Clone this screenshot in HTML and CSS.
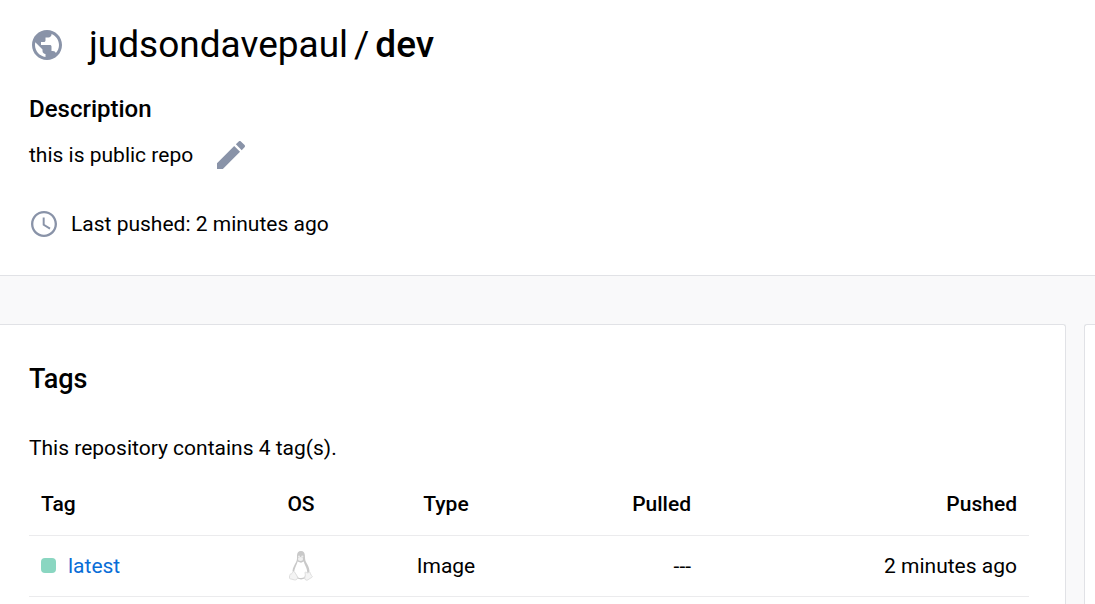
FILE: index.html
```html
<!DOCTYPE html>
<html lang="en">
<head>
<meta charset="utf-8">
<title>judsondavepaul/dev</title>
<link rel="stylesheet" href="styles.css">
</head>
<body>
<header class="repo">
  <div class="repo-title">
    <svg class="icon-globe" viewBox="2 2 20 20" aria-hidden="true"><path d="M12 2C6.48 2 2 6.48 2 12s4.48 10 10 10 10-4.48 10-10S17.52 2 12 2zm-1 17.93c-3.95-.49-7-3.85-7-7.93 0-.62.08-1.21.21-1.79L9 15v1c0 1.1.9 2 2 2v1.93zm6.9-2.54c-.26-.81-1-1.39-1.9-1.39h-1v-3c0-.55-.45-1-1-1H8v-2h2c.55 0 1-.45 1-1V7h2c1.1 0 2-.9 2-2v-.41c2.93 1.19 5 4.06 5 7.41 0 2.08-.8 3.97-2.1 5.39z"/></svg>
    <h1 class="repo-name"><span>judsondavepaul</span><span>/</span><strong class="repo-slug">dev</strong></h1>
  </div>
  <h2 class="label">Description</h2>
  <div class="description">
    <p class="text">this is public repo</p>
    <button class="edit" type="button" aria-label="Edit description">
      <svg class="icon-pencil" viewBox="3 3 18 18" aria-hidden="true"><path d="M3 17.25V21h3.75L17.81 9.94l-3.75-3.75L3 17.25zM20.71 7.04c.39-.39.39-1.02 0-1.41l-2.34-2.34a.996.996 0 0 0-1.41 0l-1.83 1.83 3.75 3.75 1.83-1.83z"/></svg>
    </button>
  </div>
  <div class="pushed">
    <svg class="icon-clock" viewBox="2 2 20 20" aria-hidden="true"><path d="M11.99 2C6.47 2 2 6.48 2 12s4.47 10 9.99 10C17.52 22 22 17.52 22 12S17.52 2 11.99 2zM12 20.2c-4.530 0-8.200-3.670-8.200-8.200S7.470 3.800 12 3.800s8.200 3.670 8.200 8.200-3.670 8.200-8.200 8.200zM12.500 7H11v6l5.250 3.150.75-1.230-4.500-2.670z"/></svg>
    <p class="text">Last pushed: 2 minutes ago</p>
  </div>
</header>
<main class="content">
  <section class="card">
    <h2 class="card-title">Tags</h2>
    <p class="text">This repository contains 4 tag(s).</p>
    <table class="tags">
      <colgroup><col class="col-tag"><col class="col-os"><col class="col-type"><col class="col-pulled"><col></colgroup>
      <thead>
        <tr><th scope="col">Tag</th><th scope="col" class="center">OS</th><th scope="col" class="center">Type</th><th scope="col" class="end">Pulled</th><th scope="col" class="end">Pushed</th></tr>
      </thead>
      <tbody>
        <tr>
          <td><div class="tag"><span class="status"></span><a class="link" href="#latest">latest</a></div></td>
          <td class="center">
            <svg class="icon-linux" viewBox="0 0 24 30" role="img" aria-label="Linux">
              <path class="tux-body" d="M12 0C9.300 0 8 2 8 4.600c0 2.500.300 4.200-1 6.600C5.500 14 3.800 16.500 3.500 20l3 7 5.500 1.500 6-1.500 2.500-7c-.300-3.800-2-6.300-3.500-9-1-2-1-4-1.100-6.400C15.800 2 14.600 0 12 0z"/>
              <path class="tux-belly" d="M8.500 10.500c-.400 3-3.500 7-3.300 11.500l4 4.500c1.800.8 4.300.8 6-.200l3.100-4.800c0-4.500-2.700-7-3.500-11l-2.800 1.200z"/>
              <ellipse class="tux-beak" cx="11.500" cy="8" rx="2.600" ry="2"/>
              <circle class="tux-eye" cx="10" cy="5.500" r="1"/><circle class="tux-eye" cx="13.300" cy="5.500" r="1.100"/>
              <path class="tux-foot" d="M4.500 20.500c1.200.200 2 2 3 3.600.900 1.500 1.300 2.300.800 3.400-.700 1.800-2.500 1.600-4.300 1-1.400-.500-3.200-.500-3.500-1.200-.300-.800.300-1.600.200-2.800-.100-1 .400-1.300 1.500-1.500 1.100-.300 1.400-2.600 2.300-2.500zM16.500 21c.700-.300 1 .9 2 .9s1.800-1.200 2.300-.8c.8.700.5 2.100 1.200 2.900.8.800 1.600 1.100 1.300 1.900-.4.900-2.300 1.200-3.300 2.200-1 .9-2.800 1.700-3.800.4-1-1.500.1-3 .1-4.700 0-1.200-.5-2.500.2-2.800z"/>
            </svg>
          </td>
          <td class="center">Image</td><td class="end">---</td><td class="end">2 minutes ago</td>
        </tr>
      </tbody>
    </table>
  </section>
  <aside class="side"></aside>
</main>
</body>
</html>
```
FILE: styles.css
```css
* { box-sizing: border-box; }
body {
  margin: 0;
  min-height: 100vh;
  display: flex;
  flex-direction: column;
  background: #f9f9fa;
  color: #000;
  font: 400 21px/24px Roboto, "Liberation Sans", sans-serif;
}
h1, h2, p { margin: 0; }
svg { display: block; fill: #8993a8; }
.repo {
  padding: 21px 29px 38px;
  background: #fff;
  border-bottom: 1px solid #e1e2e6;
}
.repo-title {
  display: flex;
  align-items: center;
  gap: 27px;
  padding-left: 3px;
}
.icon-globe { width: 30px; height: 30px; }
.repo-name {
  display: flex;
  gap: 6px;
  font-size: 37px;
  line-height: 48px;
  font-weight: 400;
}
.repo-slug { font-weight: 500; }
.label {
  margin-top: 24px;
  font-size: 24px;
  line-height: 32px;
  font-weight: 500;
}
.description {
  display: flex;
  align-items: center;
  gap: 24px;
  margin-top: 16px;
}
.edit {
  padding: 0;
  border: 0;
  background: none;
  cursor: pointer;
}
.icon-pencil { width: 28px; height: 28px; }
.pushed {
  display: flex;
  align-items: center;
  gap: 14px;
  margin-top: 42px;
  padding-left: 2px;
}
.icon-clock { width: 26px; height: 26px; }
.content {
  flex: 1;
  display: flex;
  gap: 18px;
  padding-top: 48px;
}
.card {
  flex: 1;
  padding: 38px 36px 0 29px;
  background: #fff;
  border: 1px solid #e1e2e6;
  border-width: 1px 1px 0 0;
  border-top-right-radius: 3px;
}
.card-title {
  margin-bottom: 41px;
  font-size: 27px;
  line-height: 32px;
  font-weight: 500;
}
.side {
  flex: 0 0 11px;
  background: #fff;
  border: 1px solid #e1e2e6;
  border-width: 1px 0 0 1px;
  border-top-left-radius: 3px;
}
.tags {
  width: 100%;
  margin-top: 14px;
  table-layout: fixed;
  border-collapse: collapse;
  text-align: left;
}
.tags th, .tags td {
  height: 61px;
  padding: 0 12px;
  border-bottom: 1px solid #ebebed;
}
.tags th { font-weight: 500; }
.tags .center { text-align: center; }
.tags .end { text-align: right; }
.col-tag { width: 21.7%; }
.col-os { width: 11%; }
.col-type { width: 18%; }
.col-pulled { width: 16.7%; }
.tag {
  display: flex;
  align-items: center;
  gap: 12px;
}
.status {
  width: 15px;
  height: 15px;
  border-radius: 4px;
  background: #8ad6c1;
}
.link { color: #086dd7; text-decoration: none; }
.icon-linux { width: 24px; height: 30px; margin: 0 auto; }
.tux-body { fill: #c9c9c9; }
.tux-belly { fill: #fff; }
.tux-beak { fill: #f0f0f0; }
.tux-eye { fill: #ededed; }
.tux-foot { fill: #f4f4f4; stroke: #dedede; stroke-width: 1; }
```
